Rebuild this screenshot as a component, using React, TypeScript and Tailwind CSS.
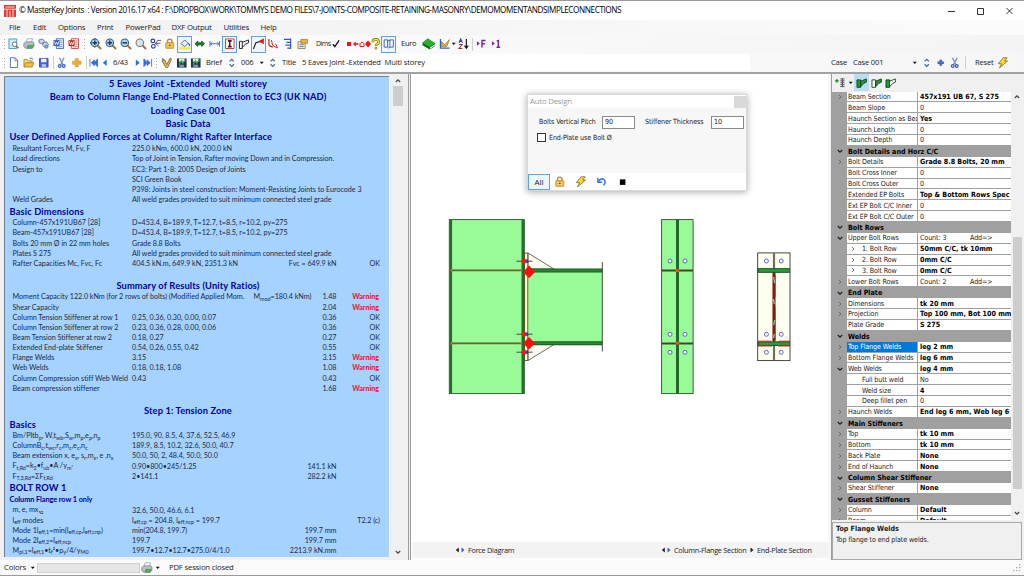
import React from "react";

type Kids = { children?: React.ReactNode };

/* ---------- small building blocks ---------- */

function Ico({ w, children, box }: Kids & { w: string; box?: boolean }) {
  return (
    <span className={`flex h-[17px] shrink-0 items-center justify-center ${w} ${box ? "border border-[#5aa2e0] bg-[#eef6fd]" : ""}`}>
      <svg viewBox="0 0 12 12" className="h-[11.5px] w-[11.5px] shrink-0 overflow-visible">
        {children}
      </svg>
    </span>
  );
}

function Txt({ w, cls = "", children }: Kids & { w: string; cls?: string }) {
  return <span className={`shrink-0 whitespace-pre ${w} ${cls}`}>{children}</span>;
}

const Sep = () => <span className="h-[13px] w-px shrink-0 bg-[#cfcfcf]" />;

const Grip = () => (
  <span className="flex w-[2px] shrink-0 flex-col gap-[2px]">
    {[0, 1, 2, 3].map((i) => (
      <i key={i} className="h-px w-px bg-[#a8a8a8]" />
    ))}
  </span>
);

function Magnifier({ mode }: { mode: "fit" | "plus" | "minus" | "none" }) {
  return (
    <>
      <path d="M7.6 7.6L11 11" stroke="#a87434" strokeWidth="2" strokeLinecap="round" />
      <circle cx="5" cy="5" r="3.9" fill={mode === "none" ? "#d8e4ec" : "#a9d2ee"} stroke={mode === "none" ? "#777" : "#3a5a78"} strokeWidth="1.1" />
      {mode !== "none" && <path d="M2.6 5H7.4" stroke="#16365c" strokeWidth="1.5" />}
      {(mode === "plus" || mode === "fit") && <path d="M5 2.6V7.4" stroke="#16365c" strokeWidth="1.5" />}
      {mode === "fit" && <path d="M5 0V1.5M5 8.5V10M0 5H1.5M8.5 5H10" stroke="#3a5a78" strokeWidth="1.6" />}
    </>
  );
}

function Printer() {
  return (
    <>
      <path d="M4.5 .8H10L8.6 5H3.2z" fill="#fff" stroke="#7a8fa8" strokeWidth=".7" />
      <path d="M.8 5.8L3 4H10L11.5 5.2V8.6L9.5 10.5H2.5L.8 9z" fill="#b9bfc8" stroke="#6c7683" strokeWidth=".7" />
      <path d="M5 7.6H11L9.6 11H4z" fill="#4caf50" stroke="#4d7a55" strokeWidth=".4" />
    </>
  );
}

function Lock() {
  return (
    <>
      <path d="M3.6 5V3.6a2.4 2.4 0 0 1 4.8 0V5" fill="none" stroke="#a98b4a" strokeWidth="1.4" />
      <rect x="1.8" y="4.8" width="8.4" height="6" rx=".6" fill="#f0b53e" stroke="#c08a30" strokeWidth=".8" />
      <path d="M2.8 6.8H9.2M2.8 8.8H9.2" stroke="#fbe0a0" strokeWidth=".7" />
      <circle cx="6" cy="7.6" r=".9" fill="#7a4c10" />
    </>
  );
}

function Floppy({ dark }: { dark?: boolean }) {
  return dark ? (
    <>
      <path d="M1 1.5H11V11H1z" fill="#1f3146" />
      <path d="M3 1.5H9V5H3z" fill="#dfe8ee" />
      <path d="M3 8L5.5 4L7 6.5L10 3" fill="none" stroke="#43a047" strokeWidth="1.3" />
      <path d="M3.5 8H8.5V11H3.5z" fill="#7f95a8" />
    </>
  ) : (
    <>
      <path d="M1.5 1.5H10.5V10.5H1.5z" fill="#4c63d8" stroke="#2c3a9c" strokeWidth=".8" />
      <path d="M3.2 1.8H8.8V5.5H3.2z" fill="#eef1ff" />
      <path d="M3.8 7.5H8.5V10.4H3.8z" fill="#b9c4f5" />
    </>
  );
}

function Scissors() {
  return (
    <>
      <path d="M3.6 .8L7.2 8M8.4 .8L4.8 8" stroke="#7e95b4" strokeWidth="1.4" />
      <circle cx="3.9" cy="9.3" r="1.4" fill="none" stroke="#2f62c0" strokeWidth="1.3" />
      <circle cx="8.1" cy="9.3" r="1.4" fill="none" stroke="#2f62c0" strokeWidth="1.3" />
    </>
  );
}

const Bolt = () => <path d="M6.5 .8L10.6 .8L8 4.2H11L2.6 11.4L4.8 7H1.4z" fill="#ffd92e" stroke="#6d6428" strokeWidth=".8" />;
const UpDown = () => <path d="M3.8 4.6L6 2.4L8.2 4.6M3.8 7.6L6 9.8L8.2 7.6" fill="none" stroke="#44699c" strokeWidth="1.3" />;
const Caret = () => <path d="M3.9 4.9H8.1L6 7.4z" fill="#111" />;
const Plus = ({ c, big }: { c: string; big?: boolean }) => (
  <path
    d={big ? "M4.3 1.5H7.7V4.3H10.5V7.7H7.7V10.5H4.3V7.7H1.5V4.3H4.3z" : "M4.8 2.8H7.2V4.8H9.2V7.2H7.2V9.2H4.8V7.2H2.8V4.8H4.8z"}
    fill={c}
    stroke="#0003"
    strokeWidth=".6"
  />
);

function WordDoc({ c }: { c: string }) {
  return (
    <>
      <path d="M3.5 .8H11V11H3.5z" fill="#f4f8fd" stroke={c} strokeWidth=".9" />
      <path d="M7.5 3H10M7.5 5H10M7.5 7H10M4.5 9.2H10" stroke={c} strokeWidth=".7" />
      <path d="M.5 2.2H7V8.4H.5z" fill={c} />
      <path d="M1.6 3.6L2.6 7L3.8 4.4L5 7L6 3.6" fill="none" stroke="#fff" strokeWidth=".8" />
    </>
  );
}

function HaunchIcon({ left, right }: { left: string; right: string }) {
  return (
    <>
      <path d="M1 3H4.8V10.8H1z" fill={left} stroke="#123d16" strokeWidth=".9" />
      <path d="M4.8 4.4L10.8 2V5.4L8.2 6.6L4.8 10.2z" fill={right} stroke="#123d16" strokeWidth=".9" />
    </>
  );
}

/* ---------- top bars ---------- */

function TitleBar() {
  return (
    <div className="flex h-[20px] items-center border-t border-[#9a9a9a] bg-white pl-[4px] text-[8.2px] text-black">
      <svg viewBox="0 0 12 12" className="h-[12px] w-[12px]">
        <path d="M0 0H12V12H0z" fill="#e03a35" />
        <path d="M0 4.2H12M3 4.5V12M9 4.5V12M6 6V12M1.5 2H10.5" stroke="#fff" strokeWidth=".8" />
      </svg>
      <Txt w="w-[604px]" cls="ml-[3px] tracking-[-0.42px]">© MasterKey Joints  : Version 2016.17 x64 : F:\DROPBOX\WORK\TOMMYS DEMO FILES\7-JOINTS-COMPOSITE-RETAINING-MASONRY\DEMOMOMENTANDSIMPLECONNECTIONS</Txt>
      <svg viewBox="0 0 70 10" className="ml-auto mr-[9px] h-[10px] w-[70px]" fill="none" stroke="#333" strokeWidth="1">
        <path d="M3 5.5H10" />
        <path d="M32.5 2.5H38.5V8.5H32.5z" />
        <path d="M61.5 2L67.5 8M67.5 2L61.5 8" />
      </svg>
    </div>
  );
}

function MenuBar() {
  const items: [string, string][] = [
    ["File", "w-[24px]"],
    ["Edit", "w-[25px]"],
    ["Options", "w-[39px]"],
    ["Print", "w-[28.5px]"],
    ["PowerPad", "w-[46px]"],
    ["DXF Output", "w-[52px]"],
    ["Utilities", "w-[37px]"],
    ["Help", "w-[30px]"],
  ];
  return (
    <div className="flex h-[15px] items-center bg-gradient-to-r from-[#f1f1f1] to-[#fbfbfb] pl-[9px] text-[7.8px] tracking-[-0.2px]">
      {items.map(([t, w]) => (
        <Txt key={t} w={w}>{t}</Txt>
      ))}
    </div>
  );
}

function IconBar() {
  return (
    <div className="flex h-[18px] items-center bg-gradient-to-r from-[#fdfdfd] to-[#f4f4f4] pl-[4px] text-[7.5px] tracking-[-0.25px]">
      <Grip />
      <Ico w="w-[15px]">
        <path d="M1 1H9V11H1z" fill="#cfeef8" stroke="#3795b4" strokeWidth=".9" />
        <circle cx="7" cy="6.5" r="2.4" fill="#fff" stroke="#666" />
        <path d="M9 8.5L11 10.8" stroke="#a87434" strokeWidth="1.6" />
      </Ico>
      <Ico w="w-[15px]"><Printer /></Ico>
      <Ico w="w-[15px]">
        <path d="M1 2L5 1L7 4L4 6L1 5zM5 5L9 4L11 7L8 10L5 8z" fill="#ccd7e4" stroke="#5d7895" strokeWidth=".9" />
        <circle cx="8.8" cy="9" r="1.8" fill="#7ea5d0" stroke="#486a90" strokeWidth=".6" />
      </Ico>
      <Ico w="w-[15px]"><WordDoc c="#2d66b8" /></Ico>
      <Ico w="w-[15px]"><WordDoc c="#c8362f" /></Ico>
      <span className="flex w-[7px] justify-center"><Grip /></span>
      <Ico w="w-[15px]"><Magnifier mode="fit" /></Ico>
      <Ico w="w-[15px]"><Magnifier mode="plus" /></Ico>
      <Ico w="w-[15px]"><Magnifier mode="minus" /></Ico>
      <Ico w="w-[15px]"><Magnifier mode="none" /></Ico>
      <Ico w="w-[15px]">
        <circle cx="3" cy="3" r="1.9" fill="none" stroke="#2b3f9c" strokeWidth="1.2" />
        <circle cx="3.5" cy="8.7" r="1.9" fill="none" stroke="#2b3f9c" strokeWidth="1.2" />
        <path d="M4.5 4.5L9 8.5M5 7L8 2.5H11.5M6 5.5H11" stroke="#556" strokeWidth="1" fill="none" />
      </Ico>
      <Ico w="w-[14px]"><Lock /></Ico>
      <Ico w="w-[15px]" box>
        <path d="M2 6L6 2L9.5 5.5L6 9z" fill="#e9f1fa" stroke="#44576e" strokeWidth=".9" />
        <path d="M9.5 5.5Q11.5 6.5 11 8.5" stroke="#2f62c0" strokeWidth="1.3" fill="none" />
        <path d="M0 9.6H12V12H0z" fill="#f7ee28" />
      </Ico>
      <Ico w="w-[15px]">
        <path d="M1 6L4 3.2V5H8V3.2L11 6L8 8.8V7H4V8.8z" fill="#178a2a" stroke="#0b3d14" strokeWidth=".8" />
      </Ico>
      <Ico w="w-[15px]">
        <path d="M1 3V9M11 3V9M1 6H11M3.4 4.4L1.6 6L3.4 7.6M8.6 4.4L10.4 6L8.6 7.6" stroke="#3c68b0" strokeWidth=".9" fill="none" />
      </Ico>
      <Ico w="w-[15px]" box>
        <path d="M1.5 1H10.5V11H1.5z" fill="#fff" stroke="#d03030" strokeWidth="1" />
        <path d="M4 3H8M4 9H8M6 3V9" stroke="#5d1515" strokeWidth="1.6" />
      </Ico>
      <Ico w="w-[14px]">
        <path d="M1.5 3.5H4.5V11H1.5zM4.5 4.5L11 2V5L7.5 6.5L4.5 10" fill="none" stroke="#222" strokeWidth="1" />
      </Ico>
      <Ico w="w-[15px]" box>
        <path d="M.5 11.5L3 5L10 3" fill="none" stroke="#222" strokeWidth="1.2" />
        <path d="M6.4 3.4L11 .8V6z" fill="#e01414" stroke="#e01414" strokeWidth=".6" />
      </Ico>
      <Ico w="w-[14px]">
        <path d="M2 1V7Q3 9 6 9.5" fill="none" stroke="#c01818" strokeWidth="1.2" />
        <path d="M4.5 2L6 8L11 10.5M9 6L11 10" fill="none" stroke="#d22" strokeWidth="1" />
      </Ico>
      <Ico w="w-[15px]">
        <path d="M9 .5V11.5M2 1.5H9M4.5 4.5H9M3.5 7.5H9M5.5 10.5H9" stroke="#3555b4" strokeWidth="1.2" />
      </Ico>
      <Ico w="w-[15px]">
        <path d="M1 4H8.5V11H1z" fill="#f5f0dd" stroke="#8c7a4a" strokeWidth=".9" />
        <path d="M4 1.5H11V5.5H4z" fill="#efb13c" stroke="#9c6d1c" strokeWidth=".7" />
        <path d="M2.5 7H7M2.5 9H7" stroke="#4b6fb0" strokeWidth=".9" />
      </Ico>
      <Txt w="w-[14px]" cls="ml-[6px] text-[7px] tracking-[-0.5px]">Dims</Txt>
      <Ico w="w-[11px]"><path d="M3 6.5L5 9L9.5 2.5" stroke="#111" strokeWidth="1.4" fill="none" /></Ico>
      <span className="ml-[5px] flex items-center">
        <svg viewBox="0 0 25 8" className="h-[8px] w-[25px]" fill="#f01414">
          <path d="M1 2H5V6H1zM7 4L9.8 1.4V3.2H12.5V4.8H9.8V6.6zM22 .6L25 4L22 7.4L19 4z" />
          <path d="M14 6.5V3.8L16 1.8L18 3.8V6.5z" fill="none" stroke="#f01414" strokeWidth="1" />
        </svg>
      </span>
      <Ico w="w-[10px]">
        <path d="M2.8 4.4Q3 1.4 6 1.4T9.2 4Q9.2 5.6 7.5 6.4Q6.2 7 6.2 8.4" fill="none" stroke="#6a6410" strokeWidth="2.6" />
        <path d="M2.8 4.4Q3 1.4 6 1.4T9.2 4Q9.2 5.6 7.5 6.4Q6.2 7 6.2 8.2" fill="none" stroke="#f3e81c" strokeWidth="1.4" />
        <circle cx="6.2" cy="10.6" r="1.1" fill="#d8cc18" stroke="#6a6410" strokeWidth=".5" />
      </Ico>
      <Ico w="w-[15px]" box>
        <path d="M1.2 2H4.8V9.5H1.2zM7.2 2H10.8V9.5H7.2zM4.8 9.5L6 10.6L7.2 9.5M4.8 2L6 3L7.2 2" fill="#fff" stroke="#2f62c0" strokeWidth="1" />
      </Ico>
      <Txt w="w-[20px]" cls="ml-[5px]">Euro</Txt>
      <Ico w="w-[16px]">
        <path d="M-.5 5L5 .5L12.5 5.5V8.5L7 12L-.5 7.5z" fill="#0a6b14" />
        <path d="M-.5 5L5 .5L12.5 5.5L7 9.5z" fill="#28b02e" />
        <path d="M7.2 10L12.3 6.4V8L7.2 11.4z" fill="#e8efe0" />
      </Ico>
      <Ico w="w-[15px]">
        <path d="M1.5 1V10.5H11" stroke="#2f62c0" strokeWidth="1.3" fill="none" />
        <path d="M2.5 9V3.5L6 7L11 1.5L8 9z" fill="#e8a72c" stroke="#8a6a20" strokeWidth=".6" />
      </Ico>
      <Ico w="w-[4px]"><Caret /></Ico>
      <Ico w="w-[16px]">
        <path d="M1 5L2.8 .8L4.6 5M1.6 3.6H4" fill="none" stroke="#2c46b8" strokeWidth="1.1" />
        <path d="M1 6.8H4.4L1 11H4.6" fill="none" stroke="#b02828" strokeWidth="1.1" />
        <path d="M8.7 1V10.5M6.8 8L8.7 10.8L10.6 8" fill="none" stroke="#111" strokeWidth="1.2" />
      </Ico>
      <Sep />
      <Ico w="w-[15px]"><path d="M2 3.4L5 5.8L2 8.2z" fill="#7b1fa2" /><path d="M7.3 10V2.6H11M7.3 6H10.3" stroke="#7b1fa2" strokeWidth="1.5" fill="none" /></Ico>
      <Ico w="w-[15px]"><path d="M2 3.4L5 5.8L2 8.2z" fill="#7b1fa2" /><path d="M7 3.2L8.7 2.6V9.6M6.8 9.6H10.6" stroke="#7b1fa2" strokeWidth="1.5" fill="none" /></Ico>
    </div>
  );
}

function RecordBar() {
  return (
    <div className="flex h-[19px] items-center bg-gradient-to-r from-[#fdfdfd] to-[#f6f6f6] pl-[4px] text-[7.6px] tracking-[-0.2px]">
      <Grip />
      <Ico w="w-[15px]"><path d="M2.5 .8H7.5L10 3.5V11H2.5z" fill="#fff" stroke="#5274a8" strokeWidth="1" /><path d="M7.3 1V4H10" fill="none" stroke="#5274a8" strokeWidth=".8" /></Ico>
      <Ico w="w-[15px]"><path d="M1 10.5V2.5H4.5L5.5 4H9.5V6" fill="#f7d774" stroke="#a37a20" strokeWidth=".8" /><path d="M1 10.5L3 6H11.5L9.5 10.5z" fill="#f2bf45" stroke="#a37a20" strokeWidth=".8" /><path d="M7 1.5Q9 .5 10.5 2.5" stroke="#2f62c0" strokeWidth="1" fill="none" /></Ico>
      <Ico w="w-[15px]"><Floppy /></Ico>
      <span className="flex w-[4px] justify-center"><Sep /></span>
      <Ico w="w-[14px]"><Scissors /></Ico>
      <Ico w="w-[15px]"><Plus c="#f0ad28" big /></Ico>
      <span className="flex w-[4px] justify-center"><Sep /></span>
      <Ico w="w-[12px]"><path d="M2 2V10M10 2L6.6 6L10 10zM6.6 3L3.6 6L6.6 9z" fill="#2d6cdf" stroke="#2d6cdf" strokeWidth=".9" /></Ico>
      <Ico w="w-[9px]"><path d="M8 2.5L4 6L8 9.5z" fill="#2d6cdf" /></Ico>
      <Txt w="w-[24px]" cls="pl-[4px]">6/43</Txt>
      <Ico w="w-[9px]"><path d="M4 2.5L8 6L4 9.5z" fill="#2d6cdf" /></Ico>
      <Ico w="w-[12px]"><path d="M10 2V10M2 2L5.4 6L2 10zM5.4 3L8.4 6L5.4 9z" fill="#2d6cdf" stroke="#2d6cdf" strokeWidth=".9" /></Ico>
      <span className="flex w-[6px] justify-center"><Grip /></span>
      <Ico w="w-[14px]"><path d="M1 4L4 3L6 8L9.5 1L11 2L7 11H5z" fill="#e7b848" stroke="#7d6838" strokeWidth=".9" /><path d="M1 1.5L3 3" stroke="#2f62c0" strokeWidth="1.2" /></Ico>
      <Ico w="w-[15px]"><Floppy dark /></Ico>
      <Ico w="w-[14px]"><Floppy dark /></Ico>
      <Txt w="w-[21px]" cls="ml-[3px]">Brief</Txt>
      <Ico w="w-[9px]"><UpDown /></Ico>
      <Txt w="w-[18px]" cls="ml-[5px]">006</Txt>
      <Ico w="w-[6px]"><Caret /></Ico>
      <Ico w="w-[16px]"><UpDown /></Ico>
      <Txt w="w-[20px]" cls="ml-[1px]">Title</Txt>
      <Txt w="w-[448px]" cls="bg-white py-[3px] tracking-[-0.14px]">5 Eaves Joint -Extended  Multi storey</Txt>
      <Txt w="w-[22px]" cls="ml-auto">Case</Txt>
      <Txt w="w-[58px]">Case 001</Txt>
      <Ico w="w-[8px]"><Caret /></Ico>
      <Ico w="w-[15px]"><UpDown /></Ico>
      <Ico w="w-[13px]"><Plus c="#4173d0" /></Ico>
      <Ico w="w-[15px]"><Scissors /></Ico>
      <span className="flex w-[6px] justify-center"><Sep /></span>
      <Txt w="w-[21px]" cls="ml-[7px]">Reset</Txt>
      <span className="mr-[14px] flex"><Ico w="w-[14px]"><Bolt /></Ico></span>
    </div>
  );
}

/* ---------- report ---------- */

const S = ({ children }: Kids) => <span className="relative top-[1.5px] text-[5.4px]">{children}</span>;

type RowProps = { h?: string; a: React.ReactNode; b?: React.ReactNode; c?: React.ReactNode; d?: string };

function Row({ h = "h-[10.25px]", a, b, c, d }: RowProps) {
  return (
    <div className={`flex items-center whitespace-pre text-[7.2px] leading-none tracking-[-0.03px] text-[#1c2b44] ${h}`}>
      <span className="w-[127px] shrink-0 overflow-visible pl-[7.5px]">{a}</span>
      <span className="w-0 shrink-0">{b}</span>
      <span className="flex w-[204.5px] shrink-0 justify-end">{c}</span>
      {d === "Warning" ? (
        <span className="flex w-[42.5px] shrink-0 justify-end font-black tracking-[-0.08px] text-[#ee1c2c]">{d}</span>
      ) : (
        <span className="flex w-[43.5px] shrink-0 justify-end">{d}</span>
      )}
    </div>
  );
}

function Head({ h = "h-[13.35px]", left, small, children }: Kids & { h?: string; left?: boolean; small?: boolean }) {
  return (
    <div
      className={`flex items-center whitespace-pre font-bold leading-none text-[#00009a] ${h} ${left ? "pl-[4.5px]" : "justify-center pr-[18px]"} ${
        small ? "text-[7.4px] tracking-[-0.1px]" : "text-[9.3px] tracking-[0.12px]"
      }`}
    >
      {children}
    </div>
  );
}

function Report() {
  const m = "h-[10.15px]";
  const n = "h-[10.1px]";
  return (
    <div className="h-[481px] w-[385px] overflow-hidden border-l border-t border-[#6f7f92] bg-[#a6d2ff] font-['Lato',sans-serif]">
      <Head>5 Eaves Joint -Extended  Multi storey</Head>
      <Head>Beam to Column Flange End-Plated Connection to EC3 (UK NAD)</Head>
      <Head>Loading Case 001</Head>
      <Head>Basic Data</Head>
      <Head left>User Defined Applied Forces at Column/Right Rafter Interface</Head>
      <Row a="Resultant Forces M, Fv, F" b="225.0 kNm, 600.0 kN, 200.0 kN" />
      <Row a="Load directions" b="Top of Joint in Tension, Rafter moving Down and in Compression." />
      <Row a="Design to" b="EC3: Part 1-8: 2005 Design of Joints" />
      <Row a="" b="SCI Green Book" />
      <Row a="" b="P398: Joints in steel construction: Moment-Resisting Joints to Eurocode 3" />
      <Row a="Weld Grades" b="All weld grades provided to suit minimum connected steel grade" />
      <Head left h="h-[12.5px]">Basic Dimensions</Head>
      <Row a="Column-457x191UB67 [28]" b="D=453.4, B=189.9, T=12.7, t=8.5, r=10.2, py=275" />
      <Row a="Beam-457x191UB67 [28]" b="D=453.4, B=189.9, T=12.7, t=8.5, r=10.2, py=275" />
      <Row a="Bolts 20 mm Ø in 22 mm holes" b="Grade 8.8 Bolts" />
      <Row a="Plates S 275" b="All weld grades provided to suit minimum connected steel grade" />
      <Row a="Rafter Capacities Mc, Fvc, Fc" b="404.5 kN.m, 649.9 kN, 2351.3 kN" c="Fvc = 649.9 kN" d="OK" />
      <div className="h-[10px]" />
      <Head h="h-[13px]">Summary of Results (Unity Ratios)</Head>
      <Row h={m} a={<>Moment Capacity 122.0 kNm (for 2 rows of bolts) (Modified Applied Mom.     M<S>mod</S>=180.4 kNm)</>} c="1.48" d="Warning" />
      <Row h={m} a="Shear Capacity" c="2.04" d="Warning" />
      <Row h={m} a="Column Tension Stiffener at row 1" b="0.25, 0.36, 0.30, 0.00, 0.07" c="0.36" d="OK" />
      <Row h={m} a="Column Tension Stiffener at row 2" b="0.23, 0.36, 0.28, 0.00, 0.06" c="0.36" d="OK" />
      <Row h={m} a="Beam Tension Stiffener at row 2" b="0.18, 0.27" c="0.27" d="OK" />
      <Row h={m} a="Extended End-plate Stiffener" b="0.54, 0.26, 0.55, 0.42" c="0.55" d="OK" />
      <Row h={m} a="Flange Welds" b="3.15" c="3.15" d="Warning" />
      <Row h={m} a="Web Welds" b="0.18, 0.18, 1.08" c="1.08" d="Warning" />
      <Row h={m} a="Column Compression stiff Web Weld" b="0.43" c="0.43" d="OK" />
      <Row h={m} a="Beam compression stiffener" c="1.68" d="Warning" />
      <div className="h-[10.8px]" />
      <Head>Step 1: Tension Zone</Head>
      <Head left>Basics</Head>
      <Row h={n} a={<>Bm/Pltb<S>p</S>, W,t<S>wb</S>,S<S>w</S>,m<S>p</S>,e<S>p</S>,n<S>p</S></>} b="195.0, 90, 8.5, 4, 37.6, 52.5, 46.9" />
      <Row h={n} a={<>ColumnB<S>c</S>,t<S>wc</S>,r<S>c</S>,m<S>c</S>,e<S>c</S>,n<S>c</S></>} b="189.9, 8.5, 10.2, 32.6, 50.0, 40.7" />
      <Row h={n} a={<>Beam extension x, e<S>x</S>, s<S>r</S>,m<S>x</S>, e ,n<S>x</S></>} b="50.0, 50, 2, 48.4, 50.0, 50.0" />
      <Row h={n} a={<>F<S>t,Rd</S>=k<S>2</S>•f<S>ub</S>•A /γ<S>m²</S></>} b="0.90•800•245/1.25" c="141.1 kN" />
      <Row h={n} a={<>F<S>T,3,Rd</S>=ΣF<S>t,Rd</S></>} b="2•141.1" c="282.2 kN" />
      <Head left>BOLT ROW 1</Head>
      <Head left small h="h-[10.4px]">Column Flange row 1 only</Head>
      <Row h={n} a={<>m, e, mx,<S>α</S></>} b="32.6, 50.0, 46.6, 6.1" />
      <Row h={n} a={<>l<S>eff</S> modes</>} b={<>l<S>eff,cp</S> = 204.8, l<S>eff,ncp</S> = 199.7</>} d="T2.2 (c)" />
      <Row h={n} a={<>Mode 1l<S>eff,1</S>=min(l<S>eff,cp</S>,l<S>eff,cnp</S>)</>} b="min(204.8, 199.7)" c="199.7 mm" />
      <Row h={n} a={<>Mode 2l<S>eff,2</S>=l<S>eff,ncp</S></>} b="199.7" c="199.7 mm" />
      <Row h={n} a={<>M<S>pl,1</S>=l<S>eff,1</S>•t<S>f</S>²•p<S>y</S>/4/γ<S>M0</S></>} b="199.7•12.7•12.7•275.0/4/1.0" c="2213.9 kN.mm" />
    </div>
  );
}

const Chev = ({ up }: { up?: boolean }) => (
  <svg viewBox="0 0 8 8" className="h-[8px] w-[8px]">
    <path d={up ? "M1.8 5L4 2.8L6.2 5" : "M1.8 3L4 5.2L6.2 3"} fill="none" stroke="#444" strokeWidth="1.2" />
  </svg>
);

function ReportPanel() {
  return (
    <div className="flex w-[409px] shrink-0 border-r border-[#9c9c9c] bg-[#f0f0f0] pl-[4px] pt-[2px]">
      <Report />
      <div className="flex h-[481px] w-[18px] flex-col items-center bg-[#f0f0f0] py-[1px]">
        <Chev up />
        <div className="mt-[1px] h-[20px] w-[10px] bg-[#cdcdcd]" />
        <div className="grow" />
        <Chev />
      </div>
    </div>
  );
}

/* ---------- drawing ---------- */

function SideBolt({ y }: { y: number }) {
  return (
    <>
      <path d={`M516.5 ${y}H532.5`} stroke="#222" strokeWidth=".8" />
      <rect x="522" y={y - 2} width="4.5" height="4" fill="#f41818" />
      <rect x="526.3" y={y - 1.7} width="1.8" height="3.4" fill="#2433d8" />
    </>
  );
}

function Holes({ xs }: { xs: number[] }) {
  return (
    <>
      {xs.flatMap((x) =>
        [261, 334.3, 352.3].map((y) => <circle key={`${x}-${y}`} cx={x} cy={y} r="2" fill="#fff" stroke="#4a52d0" strokeWidth=".9" />)
      )}
    </>
  );
}

function Drawing() {
  const green = "#98fb98";
  const dark = "#2b8534";
  const edge = "#2e4a30";
  return (
    <svg viewBox="412 74 415 468" className="h-[468px] w-[415px]">
      <rect x="449.3" y="219.6" width="75" height="174" fill={green} stroke={edge} strokeWidth=".9" />
      <path d="M450.7 220V393.4M522.9 220V393.4" stroke="#23702b" strokeWidth="2.8" />
      <path d="M451 270.4H522M451 343.4H522" stroke="#6f5a2c" strokeWidth="1.8" />
      <path d="M451 270.4H522M451 343.4H522" stroke="#3f7f3a" strokeWidth=".6" />
      <rect x="450.5" y="269.4" width="1.4" height="2" fill="#f06a2a" />
      <rect x="450.5" y="342.4" width="1.4" height="2" fill="#f06a2a" />
      <rect x="520.6" y="269.4" width="1.4" height="2" fill="#f06a2a" />
      <rect x="520.6" y="342.4" width="1.4" height="2" fill="#f06a2a" />

      <path d="M528 253L554 269H528zM528 360.5L554 344.5H528z" fill="#fffff0" stroke="#444" strokeWidth=".8" />
      <rect x="527.8" y="269" width="74.4" height="75.6" fill={green} />
      <path d="M528 270.6H602.3M528 343.2H602.3" stroke="#185c20" strokeWidth="4" />
      <path d="M528 270.6H602.3M528 343.2H602.3" stroke={dark} strokeWidth="2" />
      <rect x="524.6" y="253" width="3.2" height="107.5" fill="#fff5c8" stroke="#4a3c20" strokeWidth=".8" />
      <path d="M602.3 262V351.5" stroke="#333" strokeWidth=".9" />
      <SideBolt y={261.2} />
      <SideBolt y={334.2} />
      <SideBolt y={352.2} />
      <path d="M529 265.6L535 272L529 278.2L523.2 272zM529 337L535 343.3L529 349.4L523.2 343.3z" fill="#fa0f0f" />

      <rect x="661.6" y="219.6" width="31.5" height="174" fill={green} stroke={edge} strokeWidth=".9" />
      <path d="M677.5 220V393.4" stroke="#1f6b28" strokeWidth="3" />
      <path d="M662 270.4H693M662 343.4H693" stroke="#3c4a22" strokeWidth="2" />
      <rect x="675.5" y="269" width="4" height="3" fill="#c8641c" />
      <rect x="675.5" y="341.6" width="4" height="3" fill="#c8641c" />
      <Holes xs={[670, 685]} />

      <rect x="757.7" y="252.9" width="32.3" height="107.7" fill="#fffff0" stroke="#333" strokeWidth=".9" />
      <path d="M774 253V360" stroke="#70705c" strokeWidth="2.2" />
      <path d="M774 273V341" stroke="#7a1f14" strokeWidth="3" />
      <path d="M773.6 277L774.6 283M773.4 299L774.2 304M774.6 320L773.8 325M774.4 334L773.5 338" stroke="#8fd8a0" strokeWidth="1.2" />
      <path d="M775.4 275V297M775.4 307V340" stroke="#c83220" strokeWidth=".7" />
      <rect x="758" y="268.7" width="31.6" height="3.6" fill="#22a038" stroke="#1d3f1a" strokeWidth=".9" />
      <rect x="758" y="341.8" width="31.6" height="3.6" fill="#22a038" stroke="#1d3f1a" strokeWidth=".9" />
      <path d="M789.6 268.4V272.8M758 341.2H771M779 341.2H790M758 346H772M778 346H790M789.6 341V346" stroke="#e01c1c" strokeWidth="1" />
      <Holes xs={[766.4, 781.2]} />
    </svg>
  );
}

function AutoDesign() {
  return (
    <div className="absolute left-[116px] top-[20px] flex h-[97px] w-[220px] flex-col border border-[#d9d9d9] bg-[#f7f7f7] text-[7px] tracking-[-0.1px] shadow-[0_1px_7px_rgba(0,0,0,0.35)]">
      <div className="flex h-[13px] items-center justify-between bg-white pl-[2px] text-[7.8px] text-[#9a9a9a]">
        <span className="tracking-[-0.2px]">Auto Design</span>
        <span className="h-[12px] w-[12px] bg-[#d9d9d9]" />
      </div>
      <div className="mt-[7px] flex h-[14px] items-center pl-[11px] font-['DejaVu_Sans_Condensed',sans-serif] text-[7.1px] tracking-[-0.13px]">
        <Txt w="w-[63px]">Bolts Vertical Pitch</Txt>
        <span className="flex h-[13px] w-[33px] items-center border border-[#8a8a8a] bg-white pl-[2px]">90</span>
        <Txt w="w-[66px]" cls="ml-[10px]">Stiffener Thickness</Txt>
        <span className="flex h-[13px] w-[33px] items-center border border-[#8a8a8a] bg-white pl-[2px]">10</span>
      </div>
      <div className="mt-[4px] flex items-center gap-[3px] pl-[9px] font-['DejaVu_Sans_Condensed',sans-serif] text-[7.1px] tracking-[-0.13px]">
        <span className="h-[9px] w-[9px] border border-[#333] bg-white" />
        <span className="leading-none">End-Plate use Bolt Ø</span>
      </div>
      <div className="mt-auto flex h-[17px] items-center bg-white">
        <span className="flex h-[16px] w-[22px] items-center justify-center border border-[#5aa2e0] bg-[#eef6fd] text-[8px]">All</span>
        <Ico w="w-[20px]"><Lock /></Ico>
        <Ico w="w-[21px]"><Bolt /></Ico>
        <Ico w="w-[22px]">
          <path d="M2 2V6.5H6.5" fill="none" stroke="#3f78d8" strokeWidth="1.6" />
          <path d="M2.5 6Q5 2 8 3.5Q11 5.5 8 9.8" fill="none" stroke="#3f78d8" strokeWidth="1.7" />
        </Ico>
        <Ico w="w-[20px]"><path d="M3 3.5H8.8V9.3H3z" fill="#000" /></Ico>
      </div>
    </div>
  );
}

function ViewTab({ arrows, label, w }: { arrows: "both" | "right"; label: string; w: string }) {
  return (
    <span className={`flex shrink-0 items-center ${w}`}>
      <svg viewBox="0 0 12 8" className="mr-[2px] h-[8px] w-[12px] shrink-0" fill="#222">
        {arrows === "both" && <path d="M4.8 1.5V6.5L1.8 4z" />}
        <path d="M7.5 1.5V6.5L10.5 4z" fill={arrows === "both" ? "#3565b8" : "#222"} />
      </svg>
      <span className="whitespace-pre">{label}</span>
    </span>
  );
}

function Canvas() {
  return (
    <div className="relative ml-[1px] flex w-[418px] shrink-0 flex-col border-l border-[#9c9c9c] bg-white pl-[1px]">
      <Drawing />
      <div className="flex h-[16px] items-center bg-[#f3f3f3] pl-[42px] text-[7.3px] tracking-[-0.26px]">
        <ViewTab arrows="both" label="Force Diagram" w="w-[206px]" />
        <ViewTab arrows="both" label="Column-Flange Section" w="w-[83px]" />
        <ViewTab arrows="right" label="End-Plate Section" w="w-[80px]" />
      </div>
      <AutoDesign />
    </div>
  );
}

/* ---------- property grid ---------- */

type Prop = { k: string; v?: string; open?: "+" | "-"; head?: boolean; sub?: number; sel?: boolean; plain?: boolean };

const props: Prop[] = [
  { k: "Beam Section", v: "457x191 UB 67, S 275", open: "+" },
  { k: "Beam Slope", v: "0", plain: true },
  { k: "Haunch Section as Bea", v: "Yes" },
  { k: "Haunch Length", v: "0", plain: true },
  { k: "Haunch Depth", v: "0", plain: true },
  { k: "Bolt Details and Horz C/C", head: true },
  { k: "Bolt Details", v: "Grade 8.8 Bolts, 20 mm", open: "+" },
  { k: "Bolt Cross Inner", v: "0", plain: true },
  { k: "Bolt Cross Outer", v: "0", plain: true },
  { k: "Extended EP Bolts", v: "Top & Bottom Rows Spec" },
  { k: "Ext EP Bolt C/C Inner", v: "0", plain: true },
  { k: "Ext EP Bolt C/C Outer", v: "0", plain: true },
  { k: "Bolt Rows", head: true },
  { k: "Upper Bolt Rows", v: "Count: 3", open: "-", plain: true },
  { k: "1. Bolt Row", v: "50mm C/C, tk 10mm", open: "+", sub: 1 },
  { k: "2. Bolt Row", v: "0mm C/C", open: "+", sub: 1 },
  { k: "3. Bolt Row", v: "0mm C/C", open: "+", sub: 1 },
  { k: "Lower Bolt Rows", v: "Count: 2", open: "+", plain: true },
  { k: "End Plate", head: true },
  { k: "Dimensions", v: "tk 20 mm", open: "+" },
  { k: "Projection", v: "Top 100 mm, Bot 100 mm", open: "+" },
  { k: "Plate Grade", v: "S 275" },
  { k: "Welds", head: true },
  { k: "Top Flange Welds", v: "leg 2 mm", open: "+", sel: true },
  { k: "Bottom Flange Welds", v: "leg 6 mm", open: "+" },
  { k: "Web Welds", v: "leg 4 mm", open: "-" },
  { k: "Full butt weld", v: "No", sub: 2, plain: true },
  { k: "Weld size", v: "4", sub: 2 },
  { k: "Deep fillet pen", v: "0", sub: 2, plain: true },
  { k: "Haunch Welds", v: "End leg 6 mm, Web leg 6 mm", open: "+" },
  { k: "Main Stiffeners", head: true },
  { k: "Top", v: "tk 10 mm", open: "+" },
  { k: "Bottom", v: "tk 10 mm", open: "+" },
  { k: "Back Plate", v: "None", open: "+" },
  { k: "End of Haunch", v: "None", open: "+" },
  { k: "Column Shear Stiffener", head: true },
  { k: "Shear Stiffener", v: "None", open: "+" },
  { k: "Gusset Stiffeners", head: true },
  { k: "Column", v: "Default", open: "+" },
  { k: "Beam", v: "Default", open: "+" },
];

const Toggle = ({ s, dark }: { s: "+" | "-"; dark?: boolean }) => (
  <svg viewBox="0 0 8 8" className="h-[8px] w-[8px] shrink-0">
    <path d={s === "+" ? "M3 2L5 4L3 6" : "M1.8 3L4 5.2L6.2 3"} fill="none" stroke={dark ? "#222" : "#666"} strokeWidth={dark ? "1.3" : ".9"} />
  </svg>
);

function PropRow({ p }: { p: Prop }) {
  if (p.head)
    return (
      <div className="flex h-[10.89px] items-center bg-[#a0a0a0]">
        <span className="flex w-[15px] shrink-0 justify-center"><Toggle s="-" dark /></span>
        <span className="whitespace-pre pl-[1px] font-bold">{p.k}</span>
      </div>
    );
  return (
    <div className="flex h-[10.89px] items-stretch overflow-hidden bg-[#a0a0a0]">
      <span className="flex w-[15px] shrink-0 items-center justify-center">{p.open && !p.sub && <Toggle s={p.open} dark={p.open === "-"} />}</span>
      <span className={`mb-[0.9px] flex w-[70px] shrink-0 items-center overflow-hidden whitespace-pre pl-[1px] tracking-[-0.12px] ${p.sel ? "bg-[#0078d7] text-white" : "bg-white text-[#222]"}`}>
        {p.sub === 1 && <span className="flex w-[14px] shrink-0 items-center pl-[1px]"><Toggle s="+" /></span>}
        {p.sub === 2 && <span className="w-[14px] shrink-0" />}
        {p.k}
      </span>
      <span className={`mb-[0.9px] ml-px flex grow items-center overflow-hidden whitespace-pre bg-white pl-[2px] ${p.plain ? "tracking-[-0.1px] text-[#222]" : "font-bold"}`}>
        <span className={p.v?.startsWith("Count") ? "w-[50px]" : ""}>{p.v}</span>
        {p.v?.startsWith("Count") && <span>Add=&gt;</span>}
      </span>
    </div>
  );
}

function PropertyPanel() {
  return (
    <div className="flex w-[193px] shrink-0 flex-col border-l border-[#9c9c9c] bg-[#f0f0f0]">
      <div className="flex h-[17.5px] shrink-0 items-center pl-[2px]">
        <Ico w="w-[13px]"><path d="M0 4H4M2 2V6" stroke="#1f8a2a" strokeWidth="1.3" /><path d="M5.5 2H10M5.5 4H10M5.5 6H10M5.5 8H10M5.5 10H10M7.8 1.5V10.5" stroke="#444" strokeWidth=".9" /></Ico>
        <Ico w="w-[7px]"><Caret /></Ico>
        <span className="flex bg-[#bcdcf4]"><Ico w="w-[15px]"><HaunchIcon left="#1e9a30" right="#1e9a30" /></Ico></span>
        <Ico w="w-[15px]"><HaunchIcon left="#fff" right="#1e9a30" /></Ico>
        <Ico w="w-[14px]"><HaunchIcon left="#1e9a30" right="#fff" /></Ico>
      </div>
      <div className="flex h-[428px] shrink-0 font-['DejaVu_Sans_Condensed',sans-serif] text-[7.1px] leading-none text-black">
        <div className="w-[179px] shrink-0 overflow-hidden">
          {props.map((p, i) => (
            <PropRow key={i} p={p} />
          ))}
        </div>
        <div className="flex w-[12px] flex-col items-center bg-[#f0f0f0]">
          <div className="mt-[1px]"><Chev up /></div>
          <div className="mt-[136px] h-[252px] w-[9px] shrink-0 bg-[#cdcdcd]" />
          <div className="mt-[20px]"><Chev /></div>
        </div>
      </div>
      <div className="mr-[2px] mt-[2px] flex h-[38px] shrink-0 flex-col gap-[3.5px] border border-[#a8a8a8] pl-[3px] pt-[2.5px] font-['DejaVu_Sans_Condensed',sans-serif] text-[7.1px] leading-none">
        <span className="whitespace-pre font-bold">Top Flange Welds</span>
        <span className="whitespace-pre tracking-[-0.1px]">Top flange to end plate welds.</span>
      </div>
    </div>
  );
}

function StatusBar() {
  return (
    <div className="flex h-[16px] items-center border-b border-[#9a9a9a] bg-[#fafafa] pl-[4px] text-[7.7px] tracking-[-0.15px]">
      <Txt w="w-[24px]">Colors</Txt>
      <Ico w="w-[9px]"><Caret /></Ico>
      <span className="h-[10px] w-[103px] border border-[#d0d0d0] bg-[#e6e6e6]" />
      <Ico w="w-[14px]"><Printer /></Ico>
      <Ico w="w-[8px]"><Caret /></Ico>
      <Txt w="w-[80px]" cls="ml-[7px] tracking-[-0.17px]">PDF session closed</Txt>
      <svg viewBox="0 0 8 8" className="ml-auto mr-[3px] h-[8px] w-[8px]" fill="#a8a8a8">
        <path d="M6 0H7.3V1.3H6zM6 3H7.3V4.3H6zM3 3H4.3V4.3H3zM6 6H7.3V7.3H6zM3 6H4.3V7.3H3zM0 6H1.3V7.3H0z" />
      </svg>
    </div>
  );
}

export default function App() {
  return (
    <div className="flex h-[576px] w-[1024px] flex-col overflow-hidden bg-[#f0f0f0] font-['Open_Sans','Noto_Sans',sans-serif] text-[#1a1a1a]">
      <TitleBar />
      <MenuBar />
      <IconBar />
      <RecordBar />
      <div className="flex h-[488px] items-start border-t-2 border-[#a2a2a2]">
        <div className="flex h-[486px] w-full items-stretch">
          <ReportPanel />
          <Canvas />
          <div className="w-[3px] shrink-0 bg-[#f6f6f6]" />
          <PropertyPanel />
        </div>
      </div>
      <StatusBar />
    </div>
  );
}
